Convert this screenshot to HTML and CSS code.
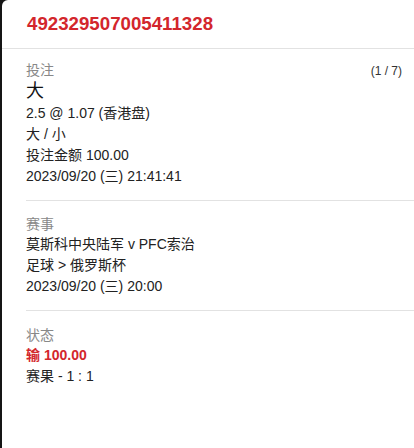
FILE: index.html
```html
<!DOCTYPE html>
<html lang="zh-CN">
<head>
  <meta charset="UTF-8" />
  <title>注单详情</title>
  <link rel="stylesheet" href="styles.css">
</head>
<body>
  <div class="panel">
    <div class="ticket-head">
      <h1 class="ticket-id">492329507005411328</h1>
    </div>

    <div class="section first">
      <div class="label-row">
        <span class="label">投注</span>
        <span class="pager">(1 / 7)</span>
      </div>
      <div class="pick">大</div>
      <div class="row">2.5 @ 1.07 (香港盘)</div>
      <div class="row">大 / 小</div>
      <div class="row">投注金额 100.00</div>
      <div class="row">2023/09/20 (三) 21:41:41</div>
    </div>

    <div class="section">
      <div class="label">赛事</div>
      <div class="row">莫斯科中央陆军 v PFC索治</div>
      <div class="row">足球 &gt; 俄罗斯杯</div>
      <div class="row">2023/09/20 (三) 20:00</div>
    </div>

    <div class="section last">
      <div class="label">状态</div>
      <div class="row loss">输 100.00</div>
      <div class="row">赛果 - 1 : 1</div>
    </div>
  </div>
</body>
</html>
```

FILE: styles.css
```css
body {
  margin: 0;
  background: #151515;
  font-family: Arial, "Liberation Sans", "Noto Sans CJK SC", sans-serif;
  color: #222;
}

.panel {
  margin-left: 2px;
  min-height: 448px;
  background: #fff;
  border-top-left-radius: 6px;
}

.ticket-head {
  height: 48px;
  padding-left: 25px;
  border-bottom: 1px solid #e2e2e2;
  display: flex;
  align-items: center;
}

.ticket-id {
  margin: 0;
  font-size: 18.7px;
  font-weight: bold;
  color: #d3262c;
}

.section {
  margin-left: 24px;
  padding: 13px 12px 13px 0;
  border-bottom: 1px solid #e2e2e2;
  font-size: 14px;
}

.section.first {
  padding-top: 11px;
}

.section.last {
  padding-top: 14px;
  border-bottom: none;
}

.label-row {
  display: flex;
  justify-content: space-between;
  align-items: baseline;
}

.label {
  line-height: 20px;
  color: #888;
}

.pager {
  font-size: 12px;
  color: #333;
}

.pick {
  font-size: 18px;
  line-height: 23px;
  color: #111;
}

.row {
  line-height: 21px;
}

.loss {
  font-weight: bold;
  color: #d3262c;
}
```
